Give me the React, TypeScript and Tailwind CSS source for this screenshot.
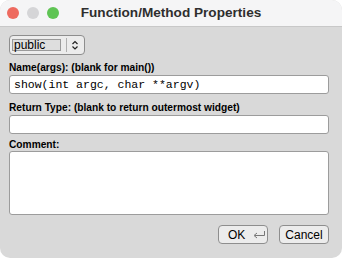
import React from 'react';

const sans = { fontFamily: '"Liberation Sans", Arial, sans-serif' };

const Label: React.FC<{ children: React.ReactNode }> = ({ children }) => (
  <div className="text-[10.2px] font-bold leading-[13px] text-black">{children}</div>
);

const App: React.FC = () => {
  return (
    <div className="w-[342px] h-[258px] bg-white" style={sans}>
      <div className="w-full h-full rounded-[10px] overflow-hidden bg-[#d9d9d9] flex flex-col">
        {/* title bar */}
        <div className="h-[27px] bg-[#f5f5f6] border-b border-[#c8c8c8] flex items-center px-[7px] relative">
          <div className="flex gap-[8px]">
            <span className="w-[12px] h-[12px] rounded-full bg-[#ee6a5f]" />
            <span className="w-[12px] h-[12px] rounded-full bg-[#d5d5d7]" />
            <span className="w-[12px] h-[12px] rounded-full bg-[#5fc454]" />
          </div>
          <div className="absolute inset-0 flex items-center justify-center pl-[0px] text-[13.6px] font-bold text-[#2e2e2e]">
            Function/Method Properties
          </div>
        </div>

        <div className="flex flex-col pl-[9px] pr-[13px] pt-[8px]">
          {/* choice */}
          <div className="w-[76px] h-[20px] bg-[#ececec] border border-[#8e8e8e] rounded-[4px] flex items-center pl-[2px]">
            <div className="w-[49px] h-[12px] border border-[#9a9a9a] bg-[#dedede] text-[12px] leading-[10px] pl-[1px] text-black">
              public
            </div>
            <div className="w-px h-[14px] bg-[#b0b0b0] ml-[5px]" />
            <svg width="16" height="12" viewBox="0 0 16 12" className="ml-[0px]">
              <path d="M5.5 5 L8 2.5 L10.5 5" fill="none" stroke="#222" strokeWidth="1.2" />
              <path d="M5.5 7.5 L8 10 L10.5 7.5" fill="none" stroke="#222" strokeWidth="1.2" />
            </svg>
          </div>

          <div className="mt-[6px]">
            <Label>Name(args): (blank for main())</Label>
          </div>
          <div className="mt-[1px] h-[19px] bg-white border border-[#9c9c9c] rounded-[3px] flex items-center pl-[4px]">
            <span className="text-[11.5px] text-black" style={{ fontFamily: '"Liberation Mono", "Courier New", monospace' }}>
              show(int argc, char **argv)
            </span>
          </div>

          <div className="mt-[7px]">
            <Label>Return Type: (blank to return outermost widget)</Label>
          </div>
          <div className="mt-[1px] h-[19px] bg-white border border-[#9c9c9c] rounded-[3px]" />

          <div className="mt-[4px]">
            <Label>Comment:</Label>
          </div>
          <div className="h-[64px] bg-white border border-[#9c9c9c] rounded-[3px]" />

          <div className="mt-[10px] flex justify-end gap-[11px]">
            <div className="w-[50px] h-[19px] bg-[#ececec] border border-[#8e8e8e] rounded-[4px] flex items-center pl-[9px] gap-[7px] text-[12px] text-black">
              <span>OK</span>
              <svg width="14" height="10" viewBox="0 0 14 10">
                <path d="M12.5 1 V5.5 H3" fill="none" stroke="#777" strokeWidth="1" />
                <path d="M5 3 L2 5.5 L5 8" fill="none" stroke="#777" strokeWidth="1" />
              </svg>
            </div>
            <div className="w-[50px] h-[19px] bg-[#ececec] border border-[#8e8e8e] rounded-[4px] flex items-center justify-center text-[12px] text-black">
              Cancel
            </div>
          </div>
        </div>
      </div>
    </div>
  );
};

export default App;
